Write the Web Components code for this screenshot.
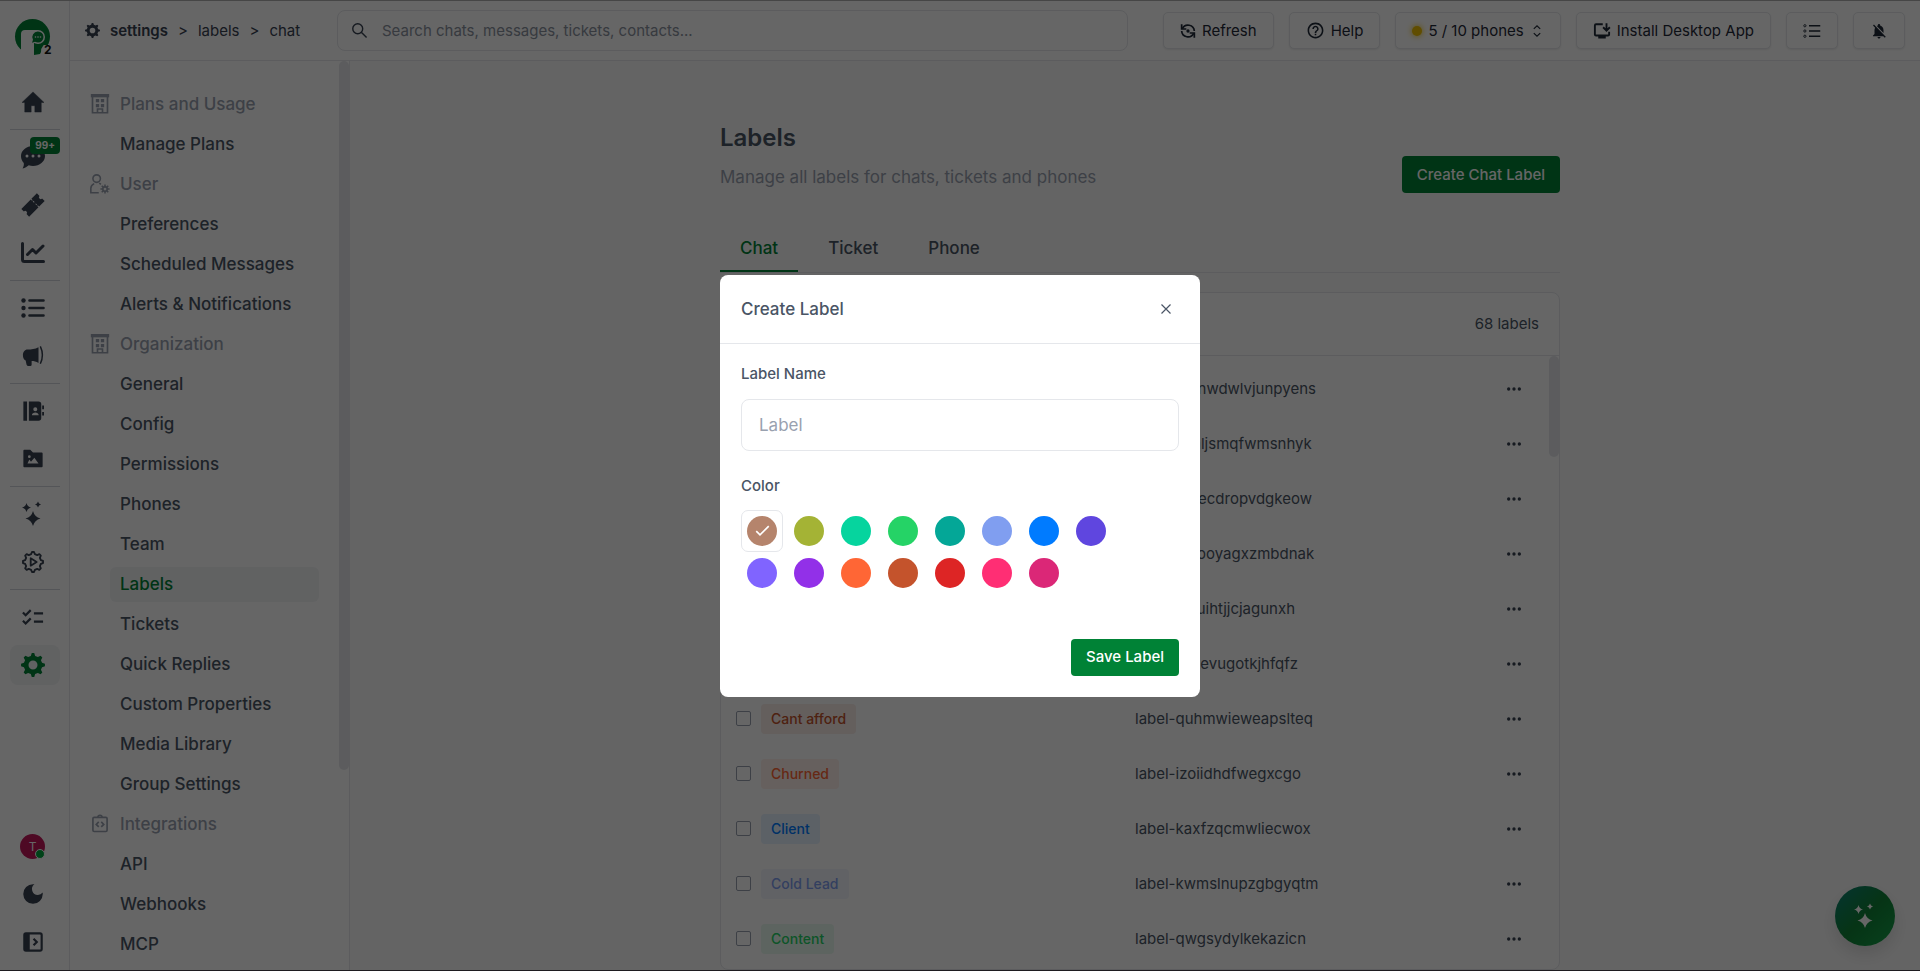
<!DOCTYPE html>
<html lang="en">
<head>
<meta charset="utf-8">
<meta name="viewport" content="width=device-width, initial-scale=1">
<title>Labels</title>
<style>
    html, body { height: 100%; margin: 0; }
    body {
        font-family: Inter, "Liberation Sans", sans-serif;
        font-size: 15px;
        line-height: 20px;
        color: #4a5565;
        --green: #008236;
        --line: #e5e7eb;
        --muted: #99a1af;
        --dark: #1f2937;
        overflow: hidden;
    }
</style>
</head>
<body>
<app-shell>
    <app-rail slot="rail"></app-rail>
    <app-topbar slot="top"></app-topbar>
    <settings-nav slot="side"></settings-nav>
    <labels-page></labels-page>
    <assistant-button slot="over"></assistant-button>
    <app-modal slot="over" heading="Create Label">
        <label-form></label-form>
    </app-modal>
</app-shell>

<script>
// points of a cog: outer/inner radius, number of teeth
function cog(teeth, outer, inner) {
    const pts = [];
    const step = Math.PI * 2 / teeth;
    const at = (r, a) => `${(12 + r * Math.sin(a)).toFixed(2)} ${(12 - r * Math.cos(a)).toFixed(2)}`;
    for (let i = 0; i < teeth; i++) {
        const a = i * step;
        pts.push(at(inner, a - step * 0.3), at(outer, a - step * 0.13), at(outer, a + step * 0.13), at(inner, a + step * 0.3));
    }
    return `M${pts.join('L')}Z`;
}

// four-pointed star
function star(x, y, r) {
    const k = r * 0.2;
    return `M${x} ${y - r}Q${x + k} ${y - k} ${x + r} ${y}Q${x + k} ${y + k} ${x} ${y + r}Q${x - k} ${y + k} ${x - r} ${y}Q${x - k} ${y - k} ${x} ${y - r}Z`;
}

const ICONS = {
    home: '<path d="M12 1 0 12.500h3V23h7v-7h4v7h7V12.500h3z" stroke="currentColor" stroke-linejoin="round" stroke-width=".5"/>',
    chat: '<path fill-rule="evenodd" d="M12 1c6.600 0 12 4.500 12 10s-5.400 10-12 10c-1.500 0-3-.2-4.300-.7C6 21.800 4 23 1.500 23.500c1-1.500 1.600-3.500 1.300-5.500C1 16 0 13.700 0 11 0 5.500 5.400 1 12 1zM6 9.500a1.500 1.500 0 1 0 0 3 1.500 1.500 0 0 0 0-3zm6 0a1.500 1.500 0 1 0 0 3 1.500 1.500 0 0 0 0-3zm6 0a1.500 1.500 0 1 0 0 3 1.500 1.500 0 0 0 0-3z"/>',
    ticket: '<path transform="rotate(-45 12 12)" d="M0 6h14.500v2h1V6H24v4a2 2 0 0 0 0 4v4h-8.500v-2h-1v2H0v-4a2 2 0 0 0 0-4zM14.500 9v2h1V9zm0 4v2h1v-2z" fill-rule="evenodd"/>',
    chart: '<path d="M1.500 2.500v16a2 2 0 0 0 2 2h19M6.500 13.500l5-5 3.500 3.500 7-7" fill="none" stroke="currentColor" stroke-width="3" stroke-linecap="round" stroke-linejoin="round"/>',
    list: '<path d="M8.500 4.500h14M8.500 12h14M8.500 19.500h14" fill="none" stroke="currentColor" stroke-width="2.600" stroke-linecap="round"/><circle cx="2.500" cy="4.500" r="2.200"/><circle cx="2.500" cy="12" r="2.200"/><circle cx="2.500" cy="19.500" r="2.200"/>',
    megaphone: '<path d="M18 2.500v17c-2.500-1.500-5-2-7.500-2v4q0 1.500-1.500 1.500H7q-1.500 0-2-1.500L4 17C2 16.500 1 14 1 11s2-6 5-6c4.500 0 8-.5 12-2.500z"/><path d="M20 1.500q4.500 9.500 0 19" fill="none" stroke="currentColor" stroke-width="1.600"/>',
    contacts: '<path d="M1.500 1.500h4v21h-4zM22 6h2v4h-2zM22 13h2v4h-2z"/><path fill-rule="evenodd" d="M7.500 1.500H18q3 0 3 3v15q0 3-3 3H7.500zM14.500 8a2.200 2.200 0 1 0 0 4.400 2.200 2.200 0 0 0 0-4.400zM10.800 16.500h7.400c0-3.800-7.400-3.800-7.400 0z"/>',
    media: '<path fill-rule="evenodd" d="M1.500 3q0-1 1-1H9l3 3h9.500q1 0 1 1v14q0 1-1 1h-19q-1 0-1-1zM6 17h12l-4.500-6.500-3.700 4.500L8 12.500zM8 8a1.500 1.500 0 1 0 0 3 1.500 1.500 0 0 0 0-3z"/>',
    sparkles: `<path d="${star(12, 16.500, 7.500)}${star(5.500, 5.500, 4.500)}${star(17, 2.500, 3)}"/>`,
    automation: `<path d="${cog(8, 11, 8.800)}" fill="none" stroke="currentColor" stroke-width="2" stroke-linejoin="round"/><path d="M9.500 8v8l6.500-4z" fill="none" stroke="currentColor" stroke-width="2" stroke-linejoin="round"/>`,
    checks: '<path d="M1 7l3 3L9.500 4.500M1 16l3 3 5.500-5.500M13 8h10M13 17h10" fill="none" stroke="currentColor" stroke-width="2.400"/>',
    settings: `<path fill-rule="evenodd" d="${cog(8, 12, 9.300)}M12 7.500a4.500 4.500 0 1 0 0 9 4.500 4.500 0 0 0 0-9z"/>`,
    moon: '<path d="M12 3a9 9 0 1 0 9 9c0-.46-.04-.92-.1-1.360a5.390 5.390 0 0 1-4.400 2.260 5.400 5.400 0 0 1-3.140-9.800c-.44-.06-.9-.1-1.360-.1z"/>',
    panel: '<rect x="4" y="4" width="16" height="16" rx="1.500" fill="none" stroke="currentColor" stroke-width="2"/><path d="M4 4h5v16H4z"/><path d="M12.500 9l3 3-3 3" fill="none" stroke="currentColor" stroke-width="2"/>',
    search: '<circle cx="9.500" cy="9.500" r="7" fill="none" stroke="currentColor" stroke-width="2"/><path d="M14.500 14.500 22 22" stroke="currentColor" stroke-width="2"/>',
    refresh: '<g fill="none" stroke="currentColor" stroke-width="2.600"><path d="M2.500 2v7h7M21.500 22v-7h-7"/><path d="M3.500 8.500A9.500 9.500 0 0 1 21.500 12M20.500 15.500A9.500 9.500 0 0 1 2.500 12"/></g><circle cx="12" cy="12" r="2.500"/>',
    help: '<path d="M11 18h2v-2h-2v2zm1-16C6.480 2 2 6.480 2 12s4.480 10 10 10 10-4.480 10-10S17.520 2 12 2zm0 18c-4.410 0-8-3.590-8-8s3.590-8 8-8 8 3.590 8 8-3.590 8-8 8zm0-14c-2.210 0-4 1.790-4 4h2c0-1.100.9-2 2-2s2 .9 2 2c0 2-3 1.750-3 5h2c0-2.250 3-2.500 3-5 0-2.210-1.790-4-4-4z"/>',
    updown: '<path d="M6.500 8.500 12 3l5.500 5.500M6.500 15.500 12 21l5.500-5.500" fill="none" stroke="currentColor" stroke-width="2"/>',
    install: '<path d="M13 3H4q-1.500 0-1.500 1.500v12Q2.500 18 4 18h16q1.500 0 1.500-1.500V13M18 1.500v9M13.500 7l4.500 4.500L22.500 7" fill="none" stroke="currentColor" stroke-width="2.500"/><path d="M7 18h10v4H7z"/>',
    lines: '<path d="M8 5h15M8 12h15M8 19h15" stroke="currentColor" stroke-width="2"/><g fill="none" stroke="currentColor" stroke-width="1.200"><circle cx="2.500" cy="5" r="1.500"/><circle cx="2.500" cy="12" r="1.500"/><circle cx="2.500" cy="19" r="1.500"/></g>',
    belloff: '<path d="M20 18.690L7.840 6.140 5.270 3.490 4 4.760l2.800 2.800v.01c-.52.99-.8 2.160-.8 3.420v5l-2 2v1h13.730l2 2L21 19.720l-1-1.030zM12 22c1.110 0 2-.89 2-2h-4c0 1.110.89 2 2 2zm6-7.320V11c0-3.080-1.640-5.640-4.500-6.320V4c0-.83-.67-1.500-1.500-1.500s-1.500.67-1.500 1.500v.68c-.5.1-1 .3-1.440.56L18 14.680z"/>',
    building: '<path d="M1 0h22v4H1z"/><path d="M3 3v19.500h18V3M9 22v-4h6v4" fill="none" stroke="currentColor" stroke-width="2"/><path d="M7 6h4v4H7zM13 6h4v4h-4zM7 12h4v4H7zM13 12h4v4h-4z"/>',
    user: '<g fill="none" stroke="currentColor" stroke-width="1.900"><circle cx="8" cy="5.500" r="4.500"/><path d="M10.500 22.500H1v-5.500c0-3 2-4.500 4-5.500M13 12.500q-1-1-2-1.500"/><circle cx="18" cy="18" r="2.600"/><path d="M18 12.500v3M18 20.500v3M12.500 18h3M20.500 18h3M14.100 14.100l2.100 2.100M19.800 19.800l2.100 2.100M14.100 21.900l2.100-2.100M19.800 16.200l2.100-2.100"/></g>',
    code: '<g fill="none" stroke="currentColor" stroke-width="2"><rect x="3.500" y="4" width="17" height="17" rx="1.500"/><path d="M9.500 4q0-2.500 2.500-2.500T14.500 4M10.500 9.500l-3 3 3 3M13.500 9.500l3 3-3 3"/></g>',
    dots: '<circle cx="4" cy="12" r="2.500"/><circle cx="12" cy="12" r="2.500"/><circle cx="20" cy="12" r="2.500"/>',
    close: '<path d="M3 3l18 18M21 3 3 21" stroke="currentColor" stroke-width="2.400"/>',
    check: '<path d="M2 13l6 6L22 5" fill="none" stroke="currentColor" stroke-width="2.600"/>'
};

class AppIcon extends HTMLElement {
    connectedCallback() {
        const size = this.getAttribute('size') || 24;
        this.attachShadow({ mode: 'open' }).innerHTML = `
            <style>
                :host { display: inline-flex; flex: none; }
                svg { width: ${size}px; height: ${size}px; fill: currentColor; overflow: visible; }
            </style>
            <svg viewBox="0 0 24 24" aria-hidden="true">${ICONS[this.getAttribute('name')]}</svg>
        `;
    }
}
customElements.define('app-icon', AppIcon);

class AppShell extends HTMLElement {
    connectedCallback() {
        this.attachShadow({ mode: 'open' }).innerHTML = `
            <style>
                :host {
                    display: flex;
                    height: 100vh;
                    box-sizing: border-box;
                    border-top: 1px solid #b0b0b0;
                    border-bottom: 1px solid #4b4650;
                    background: #fff;
                }
                .right { flex: 1; min-width: 0; display: flex; flex-direction: column; }
                .body { flex: 1; min-height: 0; display: flex; }
            </style>
            <slot name="rail"></slot>
            <div class="right">
                <slot name="top"></slot>
                <div class="body">
                    <slot name="side"></slot>
                    <slot></slot>
                </div>
            </div>
            <slot name="over"></slot>
        `;
    }
}
customElements.define('app-shell', AppShell);

class AppRail extends HTMLElement {
    connectedCallback() {
        const groups = [
            [['home', 'Home']],
            [['chat', 'Chats'], ['ticket', 'Tickets'], ['chart', 'Analytics']],
            [['list', 'Lists'], ['megaphone', 'Broadcasts']],
            [['contacts', 'Contacts'], ['media', 'Media']],
            [['sparkles', 'AI'], ['automation', 'Automations']],
            [['checks', 'Tasks'], ['settings', 'Settings']]
        ];
        const size = { home: 22, ticket: 22, media: 22, contacts: 22, automation: 22, megaphone: 22, checks: 22 };
        const link = ([name, title]) => `
            <a href="#${name}" aria-label="${title}" class="${name === 'settings' ? 'on' : ''}">
                <app-icon name="${name}" size="${size[name] || 24}"></app-icon>
                ${name === 'chat' ? '<b>99+</b>' : ''}
            </a>`;

        this.attachShadow({ mode: 'open' }).innerHTML = `
            <style>
                :host {
                    display: flex;
                    flex-direction: column;
                    width: 50px;
                    padding: 17px 9px 8px 10px;
                    border-right: 1px solid var(--line);
                    color: #374151;
                }
                .logo { height: 64px; padding-left: 5px; }
                .logo svg { overflow: visible; }
                .group { display: grid; gap: 8px; }
                .rule { margin: 7px 0; border: 0; border-top: 1px solid #d1d5dc; }
                a, button {
                    display: flex;
                    align-items: center;
                    justify-content: center;
                    height: 40px;
                    box-sizing: border-box;
                    padding: 0 5px 0 0;
                    border: 0;
                    border-radius: 8px;
                    background: none;
                    color: inherit;
                    position: relative;
                    text-decoration: none;
                    font: inherit;
                }
                a.on { background: #f3f4f6; color: var(--green); }
                b {
                    position: absolute;
                    top: 0;
                    right: 0;
                    padding: 0 5px;
                    border-radius: 4px;
                    background: var(--green);
                    color: #fff;
                    font-size: 10px;
                    font-weight: 700;
                    line-height: 17px;
                }
                .foot { margin-top: auto; }
                .avatar {
                    width: 25px;
                    height: 25px;
                    border-radius: 50%;
                    background: #c2185b;
                    color: #fff;
                    font-size: 12px;
                    line-height: 25px;
                    position: relative;
                }
                .avatar i {
                    position: absolute;
                    right: 0;
                    bottom: 0;
                    width: 8px;
                    height: 8px;
                    border-radius: 50%;
                    border: 1px solid #fff;
                    background: #00a63e;
                }
            </style>
            <div class="logo">
                <svg width="38" height="38" viewBox="0 0 38 38" role="img" aria-label="Logo">
                    <circle cx="17.500" cy="18.500" r="17.500" fill="#008236"/>
                    <path fill="#fff" d="M3 38q3-3 3-7V16q0-4 4-4h13v8l-4 6v12zM25 27h13v11H25z"/>
                    <path fill="#008236" d="M19 25q6 4 12-1l-3 4q-2 2-2 6l-1 2-6 1z"/>
                    <circle cx="23" cy="19" r="7" fill="#fff"/>
                    <path fill="#008236" d="M23 13.500a5.500 5.500 0 1 1 0 11c-1 0-2-.2-3-.8l-3 1 1-3a5.500 5.500 0 0 1 5-8.200z"/>
                    <g fill="#fff"><circle cx="20.500" cy="19" r=".8"/><circle cx="23" cy="19" r=".8"/><circle cx="25.500" cy="19" r=".8"/></g>
                    <text x="29" y="36" font-family="Inter" font-size="12" font-weight="700" fill="#111">2</text>
                </svg>
            </div>
            ${groups.map(g => `<div class="group">${g.map(link).join('')}</div>`).join('<hr class="rule">')}
            <div class="group foot">
                <button aria-label="Account"><span class="avatar">T<i></i></span></button>
                <button aria-label="Dark mode"><app-icon name="moon" size="26"></app-icon></button>
                <button aria-label="Expand"><app-icon name="panel" size="26"></app-icon></button>
            </div>
        `;
    }
}
customElements.define('app-rail', AppRail);

class TopButton extends HTMLElement {
    connectedCallback() {
        this.attachShadow({ mode: 'open' }).innerHTML = `
            <style>
                :host { display: block; flex: none; }
                button {
                    display: flex;
                    align-items: center;
                    gap: 6px;
                    height: 37px;
                    padding: 0 16px;
                    border: 1px solid var(--line);
                    border-radius: 5px;
                    background: #fff;
                    box-shadow: 0 1px 2px rgba(0, 0, 0, 0.08);
                    color: var(--dark);
                    font: inherit;
                    white-space: nowrap;
                }
            </style>
            <button aria-label="${this.getAttribute('label') || this.textContent.trim()}"><slot></slot></button>
        `;
    }
}
customElements.define('top-button', TopButton);

class AppTopbar extends HTMLElement {
    connectedCallback() {
        this.attachShadow({ mode: 'open' }).innerHTML = `
            <style>
                :host {
                    display: flex;
                    align-items: center;
                    height: 59px;
                    padding: 0 15px;
                    border-bottom: 1px solid var(--line);
                }
                nav { display: flex; align-items: center; gap: 10px; color: #374151; flex: none; width: 252px; }
                nav a { color: inherit; text-decoration: none; }
                nav a.first { font-weight: 600; }
                .search {
                    flex: 1;
                    max-width: 791px;
                    height: 41px;
                    display: flex;
                    align-items: center;
                    gap: 14px;
                    padding: 0 13px;
                    box-sizing: border-box;
                    border: 1px solid var(--line);
                    border-radius: 8px;
                    color: #374151;
                }
                input {
                    flex: 1;
                    min-width: 0;
                    border: 0;
                    outline: 0;
                    padding: 0;
                    background: none;
                    font: inherit;
                    color: inherit;
                }
                input::placeholder { color: #8a919e; opacity: 1; }
                .actions { display: flex; gap: 15px; margin-left: auto; padding-left: 20px; }
                .dot {
                    width: 10px;
                    height: 10px;
                    border-radius: 50%;
                    background: #f0c000;
                    box-shadow: 0 0 6px #f0c000;
                }
            </style>
            <nav aria-label="Breadcrumb">
                <app-icon name="settings" size="15"></app-icon>
                <a class="first" href="#settings">settings</a><span>&gt;</span>
                <a href="#labels">labels</a><span>&gt;</span>
                <a href="#chat">chat</a>
            </nav>
            <label class="search">
                <app-icon name="search" size="17"></app-icon>
                <input type="search" aria-label="Search" placeholder="Search chats, messages, tickets, contacts...">
            </label>
            <div class="actions">
                <top-button><app-icon name="refresh" size="16"></app-icon>Refresh</top-button>
                <top-button><app-icon name="help" size="19"></app-icon>Help</top-button>
                <top-button><span class="dot"></span>5 / 10 phones<app-icon name="updown" size="14"></app-icon></top-button>
                <top-button><app-icon name="install" size="18"></app-icon>Install Desktop App</top-button>
                <top-button label="Tasks"><app-icon name="lines" size="18"></app-icon></top-button>
                <top-button label="Notifications"><app-icon name="belloff" size="18"></app-icon></top-button>
            </div>
        `;
    }
}
customElements.define('app-topbar', AppTopbar);

class SettingsNav extends HTMLElement {
    connectedCallback() {
        const sections = [
            ['building', 'Plans and Usage', ['Manage Plans']],
            ['user', 'User', ['Preferences', 'Scheduled Messages', 'Alerts &amp; Notifications']],
            ['building', 'Organization', ['General', 'Config', 'Permissions', 'Phones', 'Team', 'Labels', 'Tickets',
                'Quick Replies', 'Custom Properties', 'Media Library', 'Group Settings']],
            ['code', 'Integrations', ['API', 'Webhooks', 'MCP']]
        ];
        this.attachShadow({ mode: 'open' }).innerHTML = `
            <style>
                :host {
                    display: flex;
                    flex: none;
                    width: 279px;
                    overflow: hidden;
                    border-right: 1px solid var(--line);
                    font-size: 17px;
                }
                nav { flex: 1; display: flex; flex-direction: column; padding: 23px 20px 0; }
                h2 {
                    display: flex;
                    align-items: center;
                    flex: none;
                    gap: 10px;
                    height: 40px;
                    margin: 0;
                    font: inherit;
                    font-weight: 500;
                    color: var(--muted);
                }
                a {
                    margin: 3px 0 2px 20px;
                    padding: 0 10px;
                    border-radius: 6px;
                    line-height: 35px;
                    color: inherit;
                    font-weight: 500;
                    text-decoration: none;
                }
                a.on { background: #f3f4f6; color: var(--green); }
                .thumb { width: 10px; height: 78%; border-radius: 5px; background: var(--line); }
            </style>
            <nav aria-label="Settings">
                ${sections.map(([icon, title, items]) => `
                    <h2><app-icon name="${icon}" size="20"></app-icon>${title}</h2>
                    ${items.map(t => `<a href="#" class="${t === 'Labels' ? 'on' : ''}">${t}</a>`).join('')}
                `).join('')}
            </nav>
            <div class="thumb"></div>
        `;
    }
}
customElements.define('settings-nav', SettingsNav);

class GreenButton extends HTMLElement {
    connectedCallback() {
        this.attachShadow({ mode: 'open' }).innerHTML = `
            <style>
                :host { display: block; flex: none; }
                button {
                    height: 37px;
                    padding: 0 15px;
                    border: 0;
                    border-radius: 4px;
                    background: var(--green);
                    color: #fff;
                    font: inherit;
                    font-weight: 500;
                }
            </style>
            <button type="button"><slot></slot></button>
        `;
    }
}
customElements.define('green-button', GreenButton);

class LabelChip extends HTMLElement {
    connectedCallback() {
        const color = this.getAttribute('color');
        this.attachShadow({ mode: 'open' }).innerHTML = `
            <style>
                :host {
                    display: inline-block;
                    padding: 0 10px;
                    border-radius: 4px;
                    background: ${color}1a;
                    color: ${color};
                    font-size: 14px;
                    font-weight: 500;
                    line-height: 30px;
                }
            </style>
            <slot></slot>
        `;
    }
}
customElements.define('label-chip', LabelChip);

class LabelsPage extends HTMLElement {
    connectedCallback() {
        const rows = [
            ['Active', '#25d366', 'label-mhnwdwlvjunpyens'],
            ['Agency', '#007bff', 'label-bxaljsmqfwmsnhyk'],
            ['Archived', '#b5846c', 'label-tvnecdropvdgkeow'],
            ['Backlog', '#5f46df', 'label-ksrooyagxzmbdnak'],
            ['Billing', '#db2777', 'label-wduihtjjcjagunxh'],
            ['Busy', '#9230e8', 'label-aczevugotkjhfqfz'],
            ['Cant afford', '#c4532c', 'label-quhmwieweapslteq'],
            ['Churned', '#ff6635', 'label-izoiidhdfwegxcgo'],
            ['Client', '#007bff', 'label-kaxfzqcmwliecwox'],
            ['Cold Lead', '#809ef0', 'label-kwmslnupzgbgyqtm'],
            ['Content', '#25d366', 'label-qwgsydylkekazicn']
        ];
        this.attachShadow({ mode: 'open' }).innerHTML = `
            <style>
                :host {
                    display: flex;
                    justify-content: center;
                    flex: 1;
                    min-width: 0;
                    padding: 60px 20px 0 30px;
                    overflow: hidden;
                    background: #fafafa;
                }
                .page { flex: 1; max-width: 840px; display: flex; flex-direction: column; }
                header { display: flex; justify-content: space-between; align-items: flex-end; }
                h1 { margin: 0; font-size: 24px; line-height: 34px; font-weight: 600; }
                p { margin: 9px 0 3px; font-size: 17px; line-height: 26px; color: var(--muted); }
                .tabs { display: flex; gap: 10px; margin-top: 34px; border-bottom: 1px solid var(--line); }
                .tabs button {
                    padding: 0 20px;
                    border: 0;
                    border-bottom: 2px solid transparent;
                    background: none;
                    color: inherit;
                    font: inherit;
                    font-size: 17px;
                    font-weight: 500;
                    line-height: 43px;
                }
                .tabs .on { color: var(--green); border-color: var(--green); }
                .card {
                    flex: 1;
                    min-height: 0;
                    display: flex;
                    flex-direction: column;
                    margin-top: 19px;
                    border: 1px solid var(--line);
                    border-radius: 8px;
                    background: #fff;
                    overflow: hidden;
                }
                .head {
                    display: flex;
                    align-items: center;
                    justify-content: space-between;
                    flex: none;
                    height: 62px;
                    padding: 0 20px 0 15px;
                    border-bottom: 1px solid var(--line);
                }
                .scroll { display: flex; min-height: 0; overflow: hidden; }
                table { flex: 1; margin-top: 5px; border-collapse: collapse; table-layout: fixed; align-self: flex-start; }
                td { height: 55px; padding: 0; }
                td:nth-child(1) { width: 40px; padding-left: 15px; box-sizing: border-box; }
                td:nth-child(3) { width: 371px; }
                td:nth-child(4) { width: 43px; }
                input {
                    appearance: none;
                    display: block;
                    width: 15px;
                    height: 15px;
                    margin: 0;
                    border: 1px solid #99a1af;
                    border-radius: 2px;
                }
                td button { display: block; padding: 0; border: 0; background: none; color: #374151; line-height: 0; }
                .thumb { width: 10px; height: 101px; border-radius: 5px; background: var(--line); }
            </style>
            <div class="page">
                <header>
                    <div>
                        <h1>Labels</h1>
                        <p>Manage all labels for chats, tickets and phones</p>
                    </div>
                    <green-button>Create Chat Label</green-button>
                </header>
                <div class="tabs" role="tablist">
                    <button role="tab" aria-selected="true" class="on">Chat</button>
                    <button role="tab">Ticket</button>
                    <button role="tab">Phone</button>
                </div>
                <section class="card">
                    <div class="head">
                        <input type="checkbox" aria-label="Select all">
                        <span>68 labels</span>
                    </div>
                    <div class="scroll">
                        <table>
                            ${rows.map(([name, color, id]) => `
                                <tr>
                                    <td><input type="checkbox" aria-label="Select ${name}"></td>
                                    <td><label-chip color="${color}">${name}</label-chip></td>
                                    <td>${id}</td>
                                    <td><button aria-label="More"><app-icon name="dots" size="16"></app-icon></button></td>
                                </tr>`).join('')}
                        </table>
                        <div class="thumb"></div>
                    </div>
                </section>
            </div>
        `;
    }
}
customElements.define('labels-page', LabelsPage);

class AssistantButton extends HTMLElement {
    connectedCallback() {
        this.attachShadow({ mode: 'open' }).innerHTML = `
            <style>
                :host { position: fixed; right: 25px; bottom: 25px; }
                button {
                    display: flex;
                    align-items: center;
                    justify-content: center;
                    width: 60px;
                    height: 60px;
                    border: 0;
                    border-radius: 50%;
                    background: linear-gradient(135deg, #0d8279, #0f8236 50%, #16a34a);
                    box-shadow: 0 8px 16px rgba(0, 0, 0, 0.12);
                    color: #fff;
                }
            </style>
            <button aria-label="Assistant"><app-icon name="sparkles" size="24"></app-icon></button>
        `;
    }
}
customElements.define('assistant-button', AssistantButton);

class AppModal extends HTMLElement {
    connectedCallback() {
        this.attachShadow({ mode: 'open' }).innerHTML = `
            <style>
                :host {
                    position: fixed;
                    inset: 0;
                    display: flex;
                    align-items: center;
                    justify-content: center;
                    background: rgba(0, 0, 0, 0.6);
                }
                .box { width: 480px; border-radius: 8px; background: #fff; }
                header {
                    display: flex;
                    align-items: center;
                    justify-content: space-between;
                    height: 68px;
                    padding: 0 28px 0 21px;
                    border-bottom: 1px solid var(--line);
                }
                h2 { margin: 0; font-size: 17px; font-weight: 500; }
                button { display: flex; padding: 0; border: 0; background: none; color: inherit; }
            </style>
            <div class="box" role="dialog" aria-modal="true" aria-labelledby="title">
                <header>
                    <h2 id="title">${this.getAttribute('heading')}</h2>
                    <button aria-label="Close"><app-icon name="close" size="12"></app-icon></button>
                </header>
                <slot></slot>
            </div>
        `;
    }
}
customElements.define('app-modal', AppModal);

class LabelForm extends HTMLElement {
    connectedCallback() {
        const colors = ['#b5846c', '#a4b335', '#06d49e', '#25d366', '#04a797', '#809ef0', '#007bff', '#5f46df',
            '#8064ff', '#9230e8', '#ff6635', '#c4532c', '#dd2525', '#ff2e74', '#db2777'];
        this.attachShadow({ mode: 'open' }).innerHTML = `
            <style>
                :host { display: block; padding: 20px 21px 21px; }
                form { display: flex; flex-direction: column; }
                label, legend { padding: 0; font-weight: 500; }
                .text {
                    height: 52px;
                    margin: 15px 0 25px;
                    padding: 0 17px;
                    box-sizing: border-box;
                    border: 1px solid var(--line);
                    border-radius: 8px;
                    font: inherit;
                    font-size: 17px;
                    color: inherit;
                    outline: 0;
                }
                .text::placeholder { color: var(--muted); opacity: 1; }
                fieldset { margin: 0; padding: 0; border: 0; }
                .grid { display: grid; grid-template-columns: repeat(8, 42px); column-gap: 5px; margin-top: 14px; }
                .swatch {
                    display: grid;
                    place-items: center;
                    height: 42px;
                    box-sizing: border-box;
                    border: 1px solid transparent;
                    border-radius: 7px;
                }
                .swatch:has(:checked) { border-color: var(--line); }
                .swatch input {
                    grid-area: 1 / 1;
                    appearance: none;
                    width: 30px;
                    height: 30px;
                    margin: 0;
                    border-radius: 50%;
                    background: var(--c);
                }
                .swatch app-icon { grid-area: 1 / 1; color: #fff; z-index: 1; visibility: hidden; }
                .swatch :checked + app-icon { visibility: visible; }
                green-button { align-self: flex-end; margin-top: 45px; }
            </style>
            <form>
                <label for="name">Label Name</label>
                <input class="text" id="name" type="text" placeholder="Label">
                <fieldset>
                    <legend>Color</legend>
                    <div class="grid">
                        ${colors.map((c, i) => `
                            <label class="swatch" style="--c: ${c}">
                                <input type="radio" name="color" aria-label="${c}" ${i ? '' : 'checked'}>
                                <app-icon name="check" size="15"></app-icon>
                            </label>`).join('')}
                    </div>
                </fieldset>
                <green-button>Save Label</green-button>
            </form>
        `;
    }
}
customElements.define('label-form', LabelForm);
</script>
</body>
</html>
